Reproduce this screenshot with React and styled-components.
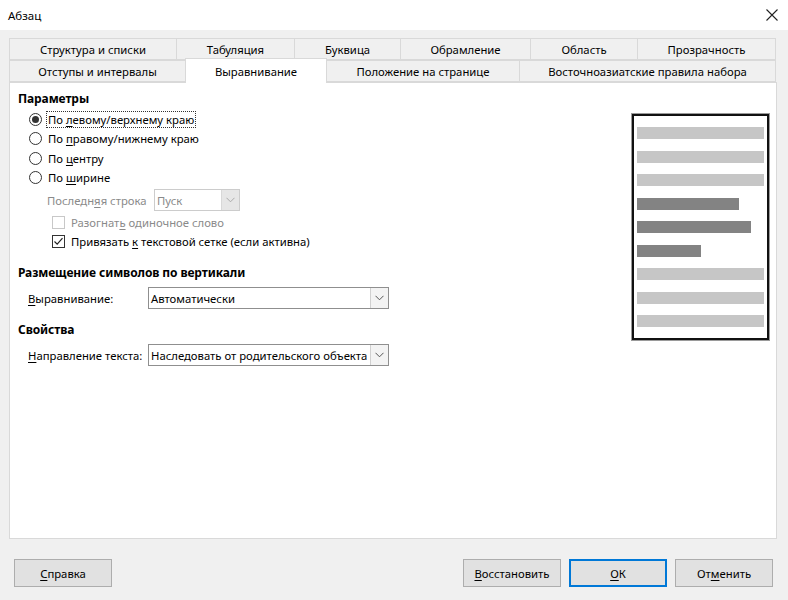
import React from "react";
import styled, { createGlobalStyle } from "styled-components";

const GlobalStyle = createGlobalStyle`
  html, body { margin: 0; padding: 0; }
  body {
    font-family: "Noto Sans", "Open Sans", sans-serif;
    font-size: 11.3px;
    color: #000;
    background: #f0f0f0;
  }
`;

const Window = styled.div`
  width: 788px;
  height: 600px;
  background: #f0f0f0;
  display: flex;
  flex-direction: column;
  overflow: hidden;
`;

const TitleBar = styled.div`
  height: 30px;
  flex: none;
  background: #fff;
  display: flex;
  align-items: center;
  justify-content: space-between;
  padding: 0 10px 0 8px;
  box-sizing: border-box;
`;

const Title = styled.span`
  font-size: 11.5px;
`;

const Body = styled.div`
  flex: 1;
  display: flex;
  flex-direction: column;
  padding: 8px 11px 0 9px;
`;

const TabRow = styled.div`
  display: flex;
  align-items: flex-end;
  height: 22px;
  padding-left: 1px;
`;

const Tab = styled.div`
  box-sizing: border-box;
  width: ${(p) => p.$w}px;
  height: ${(p) => (p.$active ? 25 : 22)}px;
  margin-left: -1px;
  margin-bottom: ${(p) => (p.$active ? -1 : 0)}px;
  border: 1px solid #d9d9d9;
  border-bottom: ${(p) => (p.$active ? "none" : "1px solid #d9d9d9")};
  background: ${(p) => (p.$active ? "#fff" : "#f0f0f0")};
  position: relative;
  z-index: ${(p) => (p.$active ? 2 : 1)};
  display: flex;
  align-items: center;
  justify-content: center;
  white-space: nowrap;
`;

const Panel = styled.div`
  box-sizing: border-box;
  height: 457px;
  border: 1px solid #d9d9d9;
  background: #fff;
  display: flex;
  justify-content: space-between;
  position: relative;
  z-index: 1;
`;

const LeftCol = styled.div`
  padding: 8px 0 0 8px;
  display: flex;
  flex-direction: column;
`;

const Heading = styled.div`
  font-weight: 700;
  font-size: 12px;
  line-height: 16px;
  height: 16px;
  margin-top: ${(p) => p.$mt || 0}px;
  letter-spacing: -0.1px;
`;

const RadioRow = styled.div`
  height: 19.3px;
  display: flex;
  align-items: center;
  padding-left: 11px;
  gap: 4px;
  margin-top: ${(p) => p.$mt || 0}px;
`;

const RadioCircle = styled.span`
  box-sizing: border-box;
  width: 13px;
  height: 13px;
  border: 1px solid #333;
  border-radius: 50%;
  display: flex;
  align-items: center;
  justify-content: center;
  &::after {
    content: "";
    display: ${(p) => (p.$checked ? "block" : "none")};
    width: 7px;
    height: 7px;
    border-radius: 50%;
    background: #333;
  }
`;

const Label = styled.span`
  line-height: 15px;
  padding: 0 1px;
  border: 1px dotted ${(p) => (p.$focus ? "#333" : "transparent")};
  color: ${(p) => (p.$disabled ? "#8a8a8a" : "#000")};
  white-space: nowrap;
`;

const U = styled.u`
  text-underline-offset: 2px;
`;

const FieldRow = styled.div`
  display: flex;
  align-items: center;
  height: 22px;
  padding-left: ${(p) => p.$pl}px;
  margin-top: ${(p) => p.$mt || 0}px;
`;

const FieldLabel = styled.span`
  width: ${(p) => p.$w}px;
  flex: none;
  color: ${(p) => (p.$disabled ? "#8a8a8a" : "#000")};
  white-space: nowrap;
`;

const Select = styled.div`
  box-sizing: border-box;
  width: ${(p) => p.$w}px;
  height: 22px;
  border: 1px solid ${(p) => (p.$disabled ? "#cccccc" : "#8f8f8f")};
  background: #fff;
  display: flex;
  align-items: stretch;
`;

const SelectText = styled.span`
  flex: 1;
  display: flex;
  align-items: center;
  padding-left: 2px;
  color: ${(p) => (p.$disabled ? "#8a8a8a" : "#000")};
  white-space: nowrap;
  overflow: hidden;
`;

const SelectButton = styled.span`
  width: 17px;
  flex: none;
  border-left: 1px solid ${(p) => (p.$disabled ? "#d8d8d8" : "#d0d0d0")};
  background: ${(p) => (p.$disabled ? "#e6e6e6" : "#f3f3f3")};
  display: flex;
  align-items: center;
  justify-content: center;
`;

const CheckRow = styled.div`
  height: 19px;
  display: flex;
  align-items: center;
  padding-left: 34px;
  gap: 4px;
  margin-top: ${(p) => p.$mt || 0}px;
`;

const CheckBox = styled.span`
  box-sizing: border-box;
  width: 13px;
  height: 13px;
  border: 1px solid ${(p) => (p.$disabled ? "#c8c8c8" : "#333")};
  background: #fff;
  display: flex;
  align-items: center;
  justify-content: center;
`;

const Preview = styled.div`
  box-sizing: border-box;
  width: 137px;
  height: 226px;
  margin: 31px 7px 0 0;
  border: 2px solid #111;
  box-shadow: 0 0 0 1px #9a9a9a;
  background: #fff;
  display: flex;
  flex-direction: column;
  padding: 11px 3px 0 3px;
  gap: 11.5px;
`;

const Bar = styled.div`
  height: 12px;
  background: ${(p) => (p.$dark ? "#838383" : "#c6c6c6")};
`;

const Footer = styled.div`
  display: flex;
  align-items: center;
  padding: 20px 4px 0 5px;
  gap: 8px;
`;

const Spacer = styled.div`
  flex: 1;
`;

const Button = styled.div`
  box-sizing: border-box;
  width: 98px;
  height: 28px;
  background: #e1e1e1;
  border: ${(p) => (p.$default ? "2px solid #0078d7" : "1px solid #adadad")};
  display: flex;
  align-items: center;
  justify-content: center;
`;

const Chevron = ({ color = "#555" }) => (
  <svg width="9" height="6" viewBox="0 0 9 6">
    <path d="M0.5 0.8 L4.5 4.8 L8.5 0.8" fill="none" stroke={color} strokeWidth="1" />
  </svg>
);

const CloseIcon = () => (
  <svg width="12" height="12" viewBox="0 0 12 12">
    <path d="M0.5 0.5 L11.5 11.5 M11.5 0.5 L0.5 11.5" stroke="#222" strokeWidth="1.1" />
  </svg>
);

const CheckMark = () => (
  <svg width="11" height="11" viewBox="0 0 11 11">
    <path d="M1.5 5.5 L4.2 8.2 L9.5 2.2" fill="none" stroke="#222" strokeWidth="1.2" />
  </svg>
);

const row1 = [
  ["Структура и списки", 168],
  ["Табуляция", 119],
  ["Буквица", 107],
  ["Обрамление", 131],
  ["Область", 108],
  ["Прозрачность", 139],
];
const row2 = [
  ["Отступы и интервалы", 177],
  ["Выравнивание", 142, true],
  ["Положение на странице", 194],
  ["Восточноазиатские правила набора", 257],
];

const bars = [
  { w: 100 },
  { w: 100 },
  { w: 100 },
  { w: 80, dark: true },
  { w: 90, dark: true },
  { w: 50.5, dark: true },
  { w: 100 },
  { w: 100 },
  { w: 100 },
];

export default function App() {
  return (
    <>
      <GlobalStyle />
      <Window>
        <TitleBar>
          <Title>Абзац</Title>
          <CloseIcon />
        </TitleBar>
        <Body>
          <TabRow>
            {row1.map(([t, w]) => (
              <Tab key={t} $w={w}>{t}</Tab>
            ))}
          </TabRow>
          <TabRow>
            {row2.map(([t, w, a]) => (
              <Tab key={t} $w={w} $active={a}>{t}</Tab>
            ))}
          </TabRow>
          <Panel>
            <LeftCol>
              <Heading>Параметры</Heading>
              <RadioRow $mt={3}>
                <RadioCircle $checked />
                <Label $focus>
                  По <U>л</U>евому/верхнему краю
                </Label>
              </RadioRow>
              <RadioRow>
                <RadioCircle />
                <Label>
                  По <U>п</U>равому/нижнему краю
                </Label>
              </RadioRow>
              <RadioRow>
                <RadioCircle />
                <Label>
                  По <U>ц</U>ентру
                </Label>
              </RadioRow>
              <RadioRow>
                <RadioCircle />
                <Label>
                  По <U>ш</U>ирине
                </Label>
              </RadioRow>
              <FieldRow $pl={29} $mt={2}>
                <FieldLabel $w={107} $disabled>
                  Последн<U>я</U>я строка
                </FieldLabel>
                <Select $w={86} $disabled>
                  <SelectText $disabled>Пуск</SelectText>
                  <SelectButton $disabled>
                    <Chevron color="#aaa" />
                  </SelectButton>
                </Select>
              </FieldRow>
              <CheckRow $mt={2}>
                <CheckBox $disabled />
                <Label $disabled>
                  Разогнат<U>ь</U> одиночное слово
                </Label>
              </CheckRow>
              <CheckRow>
                <CheckBox>
                  <CheckMark />
                </CheckBox>
                <Label>
                  Привязать <U>к</U> текстовой сетке (если активна)
                </Label>
              </CheckRow>
              <Heading $mt={14}>Размещение символов по вертикали</Heading>
              <FieldRow $pl={10} $mt={6}>
                <FieldLabel $w={120}>
                  <U>В</U>ыравнивание:
                </FieldLabel>
                <Select $w={241}>
                  <SelectText>Автоматически</SelectText>
                  <SelectButton>
                    <Chevron />
                  </SelectButton>
                </Select>
              </FieldRow>
              <Heading $mt={13}>Свойства</Heading>
              <FieldRow $pl={10} $mt={6}>
                <FieldLabel $w={120}>
                  <U>Н</U>аправление текста:
                </FieldLabel>
                <Select $w={241}>
                  <SelectText>Наследовать от родительского объекта</SelectText>
                  <SelectButton>
                    <Chevron />
                  </SelectButton>
                </Select>
              </FieldRow>
            </LeftCol>
            <Preview>
              {bars.map((b, i) => (
                <Bar key={i} $dark={b.dark} style={{ width: `${b.w}%` }} />
              ))}
            </Preview>
          </Panel>
          <Footer>
            <Button>
              <span>
                <U>С</U>правка
              </span>
            </Button>
            <Spacer />
            <Button>
              <span>
                <U>В</U>осстановить
              </span>
            </Button>
            <Button $default>
              <span>
                <U>О</U>К
              </span>
            </Button>
            <Button>
              <span>
                От<U>м</U>енить
              </span>
            </Button>
          </Footer>
        </Body>
      </Window>
    </>
  );
}
